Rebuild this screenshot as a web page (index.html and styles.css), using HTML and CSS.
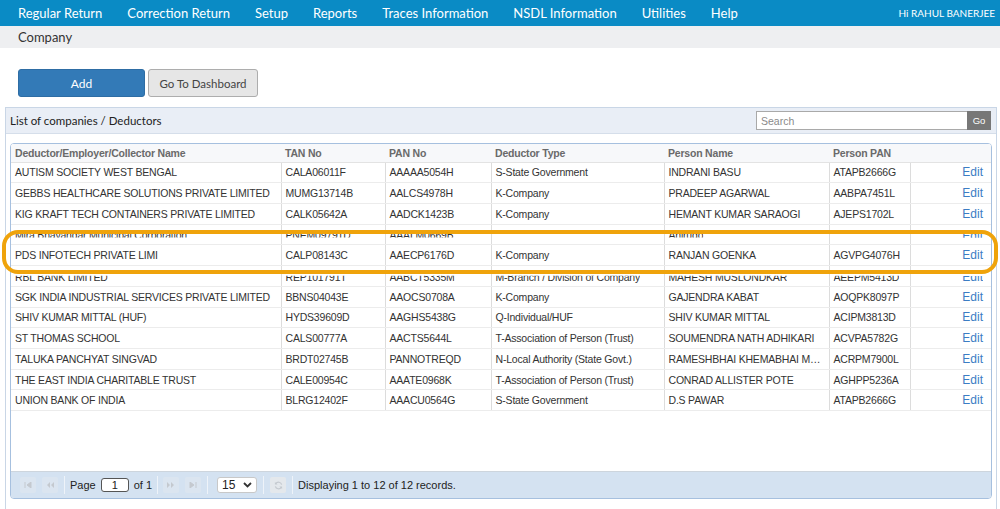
FILE: index.html
```html
<!DOCTYPE html>
<html>
<head>
<meta charset="utf-8">
<link rel="stylesheet" href="styles.css">
</head>
<body>
<nav class="topnav">
  <ul class="menu">
    <li>Regular Return</li>
    <li>Correction Return</li>
    <li>Setup</li>
    <li>Reports</li>
    <li>Traces Information</li>
    <li>NSDL Information</li>
    <li>Utilities</li>
    <li>Help</li>
  </ul>
  <div class="user">Hi RAHUL BANERJEE</div>
</nav>
<div class="crumb">Company</div>
<div class="actions">
  <button class="btn btn-primary">Add</button>
  <button class="btn btn-default">Go To Dashboard</button>
</div>
<section class="panel">
  <div class="panel-head">
    <div class="panel-title">List of companies / Deductors</div>
    <div class="search">
      <input class="search-input" type="text" placeholder="Search">
      <span class="search-go">Go</span>
    </div>
  </div>
  <div class="panel-body">
    <div class="grid">
      <div class="grid-scroll">
        <table class="gtable">
          <colgroup>
            <col class="c1"><col class="c2"><col class="c3"><col class="c4"><col class="c5"><col class="c6"><col class="c7">
          </colgroup>
          <thead>
            <tr><th>Deductor/Employer/Collector Name</th><th>TAN No</th><th>PAN No</th><th>Deductor Type</th><th>Person Name</th><th>Person PAN</th><th></th></tr>
          </thead>
          <tbody>
            <tr><td>AUTISM SOCIETY WEST BENGAL</td><td>CALA06011F</td><td>AAAAA5054H</td><td>S-State Government</td><td>INDRANI BASU</td><td>ATAPB2666G</td><td class="edit">Edit</td></tr>
            <tr><td>GEBBS HEALTHCARE SOLUTIONS PRIVATE LIMITED</td><td>MUMG13714B</td><td>AALCS4978H</td><td>K-Company</td><td>PRADEEP AGARWAL</td><td>AABPA7451L</td><td class="edit">Edit</td></tr>
            <tr><td>KIG KRAFT TECH CONTAINERS PRIVATE LIMITED</td><td>CALK05642A</td><td>AADCK1423B</td><td>K-Company</td><td>HEMANT KUMAR SARAOGI</td><td>AJEPS1702L</td><td class="edit">Edit</td></tr>
            <tr class="cut-bottom"><td><span class="clip">Mira Bhayandar Municipal Corporation</span></td><td><span class="clip">PNEM09791D</span></td><td><span class="clip">AAALM0669B</span></td><td></td><td><span class="clip">Anirudo</span></td><td></td><td class="edit"><span class="clip">Edit</span></td></tr>
            <tr><td>PDS INFOTECH PRIVATE LIMI</td><td>CALP08143C</td><td>AAECP6176D</td><td>K-Company</td><td>RANJAN GOENKA</td><td>AGVPG4076H</td><td class="edit">Edit</td></tr>
            <tr class="cut-top"><td><span class="clip">RBL BANK LIMITED</span></td><td><span class="clip">REP101791T</span></td><td><span class="clip">AABCT5335M</span></td><td><span class="clip">M-Branch / Division of Company</span></td><td><span class="clip">MAHESH MUSLONDKAR</span></td><td><span class="clip">AEEPM5413D</span></td><td class="edit"><span class="clip">Edit</span></td></tr>
            <tr><td>SGK INDIA INDUSTRIAL SERVICES PRIVATE LIMITED</td><td>BBNS04043E</td><td>AAOCS0708A</td><td>K-Company</td><td>GAJENDRA KABAT</td><td>AOQPK8097P</td><td class="edit">Edit</td></tr>
            <tr><td>SHIV KUMAR MITTAL (HUF)</td><td>HYDS39609D</td><td>AAGHS5438G</td><td>Q-Individual/HUF</td><td>SHIV KUMAR MITTAL</td><td>ACIPM3813D</td><td class="edit">Edit</td></tr>
            <tr><td>ST THOMAS SCHOOL</td><td>CALS00777A</td><td>AACTS5644L</td><td>T-Association of Person (Trust)</td><td>SOUMENDRA NATH ADHIKARI</td><td>ACVPA5782G</td><td class="edit">Edit</td></tr>
            <tr><td>TALUKA PANCHYAT SINGVAD</td><td>BRDT02745B</td><td>PANNOTREQD</td><td>N-Local Authority (State Govt.)</td><td class="ellip">RAMESHBHAI KHEMABHAI MAHESHWARI</td><td>ACRPM7900L</td><td class="edit">Edit</td></tr>
            <tr><td>THE EAST INDIA CHARITABLE TRUST</td><td>CALE00954C</td><td>AAATE0968K</td><td>T-Association of Person (Trust)</td><td>CONRAD ALLISTER POTE</td><td>AGHPP5236A</td><td class="edit">Edit</td></tr>
            <tr><td>UNION BANK OF INDIA</td><td>BLRG12402F</td><td>AAACU0564G</td><td>S-State Government</td><td>D.S PAWAR</td><td>ATAPB2666G</td><td class="edit">Edit</td></tr>
          </tbody>
        </table>
      </div>
      <div class="pager">
        <span class="pbtn"><svg width="8" height="6" viewBox="0 0 8 6"><path d="M1 0v6M7 0L3 3l4 3z" stroke="#c4c9cf" fill="#c4c9cf" stroke-width="1"/></svg></span>
        <span class="pbtn"><svg width="8" height="6" viewBox="0 0 8 6"><path d="M4 0L1 3l3 3zM8 0L5 3l3 3z" fill="#c4c9cf"/></svg></span>
        <span class="psep"></span>
        <span class="ptext">Page</span>
        <span class="pinput">1</span>
        <span class="ptext">of 1</span>
        <span class="psep"></span>
        <span class="pbtn"><svg width="8" height="6" viewBox="0 0 8 6"><path d="M0 0l3 3-3 3zM4 0l3 3-3 3z" fill="#c4c9cf"/></svg></span>
        <span class="pbtn"><svg width="8" height="6" viewBox="0 0 8 6"><path d="M1 0l4 3-4 3zM7 0v6" stroke="#c4c9cf" fill="#c4c9cf" stroke-width="1"/></svg></span>
        <span class="psep"></span>
        <span class="pselect">15 <svg width="9" height="6" viewBox="0 0 9 6"><path d="M1 1l3.5 3.5L8 1" stroke="#333" stroke-width="1.8" fill="none"/></svg></span>
        <span class="psep"></span>
        <span class="pbtn refresh"><svg width="9" height="9" viewBox="0 0 10 10"><path d="M8.5 4A3.6 3.6 0 0 0 2 3M1.5 6A3.6 3.6 0 0 0 8 7" stroke="#c4c9cf" stroke-width="1.4" fill="none"/><path d="M1 1v3h3zM9 9V6H6z" fill="#c4c9cf"/></svg></span>
        <span class="psep"></span>
        <span class="ptext">Displaying 1 to 12 of 12 records.</span>
      </div>
    </div>
    <div class="highlight"></div>
  </div>
</section>
</body>
</html>
```
FILE: styles.css
```css
* { box-sizing: border-box; }
html, body { margin: 0; padding: 0; background: #fff; }
body { font-family: Lato, "Open Sans", sans-serif; color: #333; width: 1000px; height: 509px; overflow: hidden; }

.topnav { height: 26px; background: #0a8bc5; display: flex; align-items: center; justify-content: space-between; padding: 0 5px 0 18px; }
.menu { list-style: none; margin: 0; padding: 0; display: flex; gap: 25px; }
.menu li { color: #fff; font-size: 13px; line-height: 26px; }
.user { color: #fff; font-size: 10px; }

.crumb { height: 22px; background: #eeeff1; font-size: 13px; line-height: 22px; padding-left: 18px; color: #333; }

.actions { display: flex; gap: 3px; padding: 21px 0 0 18px; }
.btn { height: 28px; font-family: Lato, "Open Sans", sans-serif; font-size: 11.5px; border-radius: 3px; padding: 0; }
.btn-primary { width: 127px; background: #337ab7; border: 1px solid #2e6da4; color: #fff; font-size: 12px; }
.btn-default { width: 110px; background: #e6e6e6; border: 1px solid #adadad; color: #444; }

.panel { margin: 10px 3px 0 5px; border: 1px solid #c9d6e6; border-bottom: none; height: 420px; }
.panel-head { height: 26px; background: #e9eef6; border-bottom: 1px solid #d5deea; display: flex; align-items: center; justify-content: space-between; padding: 0 5px 0 4px; }
.panel-title { font-size: 11.5px; color: #222; }
.search { display: flex; height: 19px; }
.search-input { width: 211px; height: 19px; border: 1px solid #a9a9a9; border-right: none; font-family: "Liberation Sans", Arial, sans-serif; font-size: 10.5px; padding: 0 4px; color: #333; outline: none; }
.search-input::placeholder { color: #8a8a8a; }
.search-go { width: 24px; height: 19px; background: #777; color: #fff; font-family: "Liberation Sans", Arial, sans-serif; font-size: 9.5px; line-height: 19px; text-align: center; }

.panel-body { position: relative; padding: 9px 4px 0 4px; }
.grid { border: 1px solid #a6c0df; border-radius: 4px; overflow: hidden; height: 356px; display: flex; flex-direction: column; }
.grid-scroll { flex: 1; background: #fff; }
.gtable { width: 982px; border-collapse: collapse; table-layout: fixed; font-family: "Liberation Sans", Arial, sans-serif; font-size: 10.5px; letter-spacing: -0.2px; }
.c1 { width: 270px; } .c2 { width: 104px; } .c3 { width: 106px; } .c4 { width: 173px; } .c5 { width: 165px; } .c6 { width: 81px; } .c7 { width: 83px; }
.gtable th { height: 18px; text-align: left; font-weight: bold; color: #6a6a6a; padding: 0 4px; background: #f7f8fa; border-bottom: 1px solid #e3e3e3; white-space: nowrap; overflow: hidden; }
.gtable td { height: 20.73px; padding: 0 4px; border-bottom: 1px solid #ececec; border-right: 1px solid #dcdcdc; color: #333; white-space: nowrap; overflow: hidden; }
.gtable td:last-child { border-right: none; }
.gtable td.edit { text-align: right; color: #3b7dc4; font-size: 12px; letter-spacing: 0; padding-right: 10px; }
.gtable td.ellip { text-overflow: ellipsis; }

.clip { display: inline-block; line-height: 13px; vertical-align: middle; }
.cut-bottom .clip { clip-path: inset(0 0 5px 0); transform: translateY(1px); }
.cut-top .clip { clip-path: inset(5px 0 0 0); transform: translateY(1px); }

.pager { height: 27px; background: #d4e2f1; border-top: 1px solid #cdd5dd; display: flex; align-items: center; padding-left: 9px; font-family: "Liberation Sans", Arial, sans-serif; font-size: 11px; color: #222; }
.pbtn { width: 16px; height: 16px; background: #dbe5f0; border-radius: 2px; display: flex; align-items: center; justify-content: center; margin-right: 6px; }
.psep { width: 1px; height: 18px; background: #b7c7d8; border-right: 1px solid #eef3f9; margin: 0 5px 0 0; }
.ptext { margin-right: 5px; }
.pinput { width: 28px; height: 14px; background: #fff; border: 1px solid #555; border-radius: 3px; line-height: 12px; text-align: center; margin-right: 5px; }
.pselect { width: 40px; height: 16px; background: #fff; border: 1px solid #c8c8c8; border-radius: 3px; display: flex; align-items: center; justify-content: space-between; padding: 0 4px; font-size: 12px; margin: 0 6px 0 4px; }
.refresh { background: #e4e8ec; margin-left: 1px; }

.highlight { position: absolute; left: -4px; right: -2px; top: 96px; height: 44px; border: 4px solid #efa30b; border-radius: 16px; pointer-events: none; }
```
